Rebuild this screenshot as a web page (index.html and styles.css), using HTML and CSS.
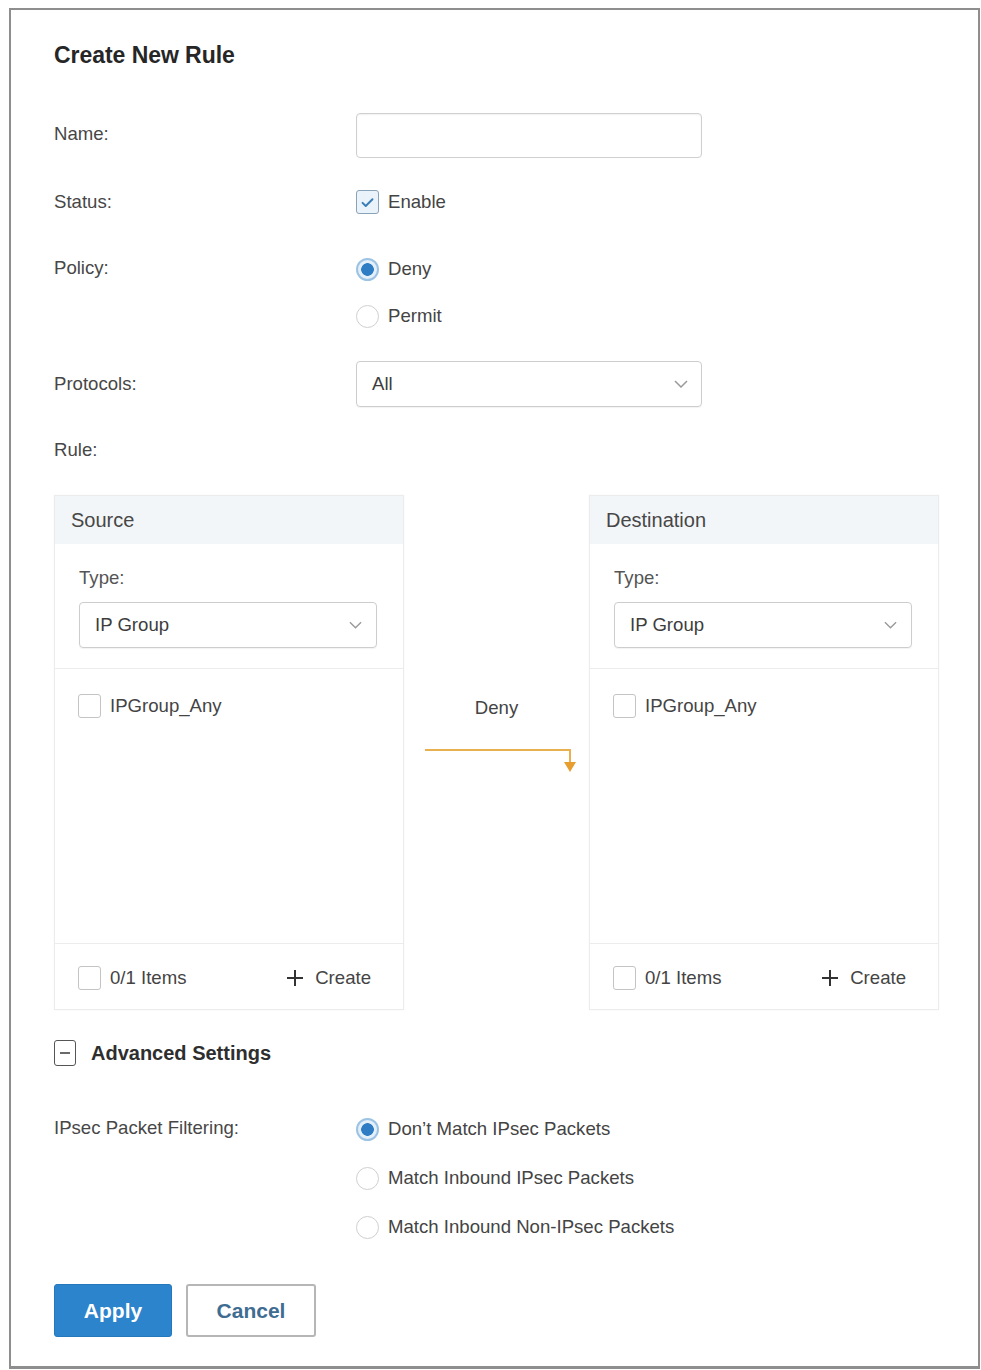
FILE: index.html
```html
<!DOCTYPE html>
<html lang="en">
<head>
<meta charset="utf-8">
<title>Create New Rule</title>
<link rel="stylesheet" href="styles.css">
</head>
<body>
<div class="frame">
  <h1 class="title">Create New Rule</h1>

  <div class="form-row row-name">
    <label class="label">Name:</label>
    <div class="input"></div>
  </div>

  <div class="form-row row-status">
    <span class="label">Status:</span>
    <div class="option">
      <span class="check checked">
        <svg viewBox="0 0 24 24" width="17" height="17"><path d="M5 12.5l4.5 4.5L19 7.5" fill="none" stroke="#3a7db6" stroke-width="2.8" stroke-linecap="round" stroke-linejoin="round"/></svg>
      </span>
      <span class="opt-text">Enable</span>
    </div>
  </div>

  <div class="form-row row-policy">
    <span class="label">Policy:</span>
    <div class="radio-list">
      <div class="option"><span class="radio on"></span><span class="opt-text">Deny</span></div>
      <div class="option"><span class="radio"></span><span class="opt-text">Permit</span></div>
    </div>
  </div>

  <div class="form-row row-protocols">
    <span class="label">Protocols:</span>
    <div class="select">
      <span class="select-text">All</span>
      <svg class="chev" viewBox="0 0 14 8" width="14" height="8"><path d="M1 1l6 6 6-6" fill="none" stroke="#9a9a9a" stroke-width="1.5"/></svg>
    </div>
  </div>

  <div class="label rule-label">Rule:</div>

  <div class="rule">
    <section class="panel">
      <div class="panel-head">Source</div>
      <div class="panel-type">
        <div class="type-label">Type:</div>
        <div class="select select-sm">
          <span class="select-text">IP Group</span>
          <svg class="chev" viewBox="0 0 14 8" width="13" height="8"><path d="M1 1l6 6 6-6" fill="none" stroke="#9a9a9a" stroke-width="1.5"/></svg>
        </div>
      </div>
      <div class="panel-list">
        <div class="option"><span class="check"></span><span class="opt-text">IPGroup_Any</span></div>
      </div>
      <div class="panel-foot">
        <div class="option"><span class="check"></span><span class="opt-text">0/1 Items</span></div>
        <div class="create">
          <svg viewBox="0 0 18 18" width="18" height="18"><path d="M9 1v16M1 9h16" stroke="#333" stroke-width="2"/></svg>
          <span>Create</span>
        </div>
      </div>
    </section>

    <div class="flow">
      <div class="flow-text">Deny</div>
      <svg class="flow-arrow" viewBox="0 0 185 40" width="185" height="40">
        <path d="M21 10H166V22" fill="none" stroke="#e9b050" stroke-width="2"/>
        <path d="M160 22h12l-6 10z" fill="#e89e2e"/>
      </svg>
    </div>

    <section class="panel">
      <div class="panel-head">Destination</div>
      <div class="panel-type">
        <div class="type-label">Type:</div>
        <div class="select select-sm">
          <span class="select-text">IP Group</span>
          <svg class="chev" viewBox="0 0 14 8" width="13" height="8"><path d="M1 1l6 6 6-6" fill="none" stroke="#9a9a9a" stroke-width="1.5"/></svg>
        </div>
      </div>
      <div class="panel-list">
        <div class="option"><span class="check"></span><span class="opt-text">IPGroup_Any</span></div>
      </div>
      <div class="panel-foot">
        <div class="option"><span class="check"></span><span class="opt-text">0/1 Items</span></div>
        <div class="create">
          <svg viewBox="0 0 18 18" width="18" height="18"><path d="M9 1v16M1 9h16" stroke="#333" stroke-width="2"/></svg>
          <span>Create</span>
        </div>
      </div>
    </section>
  </div>

  <div class="advanced">
    <span class="collapse">
      <svg viewBox="0 0 10 2" width="10" height="2"><path d="M0 1h10" stroke="#444" stroke-width="1.6"/></svg>
    </span>
    <span class="advanced-text">Advanced Settings</span>
  </div>

  <div class="form-row row-ipsec">
    <span class="label">IPsec Packet Filtering:</span>
    <div class="radio-list radio-list-wide">
      <div class="option"><span class="radio on"></span><span class="opt-text">Don’t Match IPsec Packets</span></div>
      <div class="option"><span class="radio"></span><span class="opt-text">Match Inbound IPsec Packets</span></div>
      <div class="option"><span class="radio"></span><span class="opt-text">Match Inbound Non-IPsec Packets</span></div>
    </div>
  </div>

  <div class="actions">
    <button class="btn btn-primary">Apply</button>
    <button class="btn btn-plain">Cancel</button>
  </div>
</div>
</body>
</html>
```

FILE: styles.css
```css
* { box-sizing: border-box; }

html, body {
  margin: 0;
  padding: 0;
  background: #ffffff;
}

body {
  font-family: "Liberation Sans", Arial, sans-serif;
  color: #444;
  width: 981px;
  height: 1370px;
  overflow: hidden;
}

.frame {
  margin: 8px 0 0 9px;
  width: 971px;
  border: 2px solid #8e8e8e;
  border-bottom-width: 3px;
  padding: 30px 0 29px 43px;
}

.title {
  margin: 0;
  font-size: 23px;
  line-height: 30px;
  font-weight: bold;
  color: #262626;
  letter-spacing: -0.05px;
}

/* label column + control column */
.form-row {
  display: grid;
  grid-template-columns: 302px 346px;
  align-items: center;
}

.label {
  font-size: 18.6px;
  line-height: 24px;
  color: #474747;
}

.row-name { margin-top: 43px; }
.row-status { margin-top: 31px; }
.row-policy { margin-top: 41px; align-items: start; }
.row-protocols { margin-top: 32px; }
.rule-label { margin-top: 31px; }
.row-ipsec { margin-top: 50px; align-items: start; grid-template-columns: 302px 420px; }
.row-ipsec .label { margin-top: 0; }
.row-policy .label { margin-top: 0; }
.row-name .label { margin-top: -3px; }

.input {
  height: 45px;
  border: 1px solid #cfcfcf;
  border-radius: 4px;
  box-shadow: inset 0 1px 2px rgba(0, 0, 0, 0.06);
}

.option {
  display: flex;
  align-items: center;
  gap: 9px;
  height: 26px;
}

.opt-text {
  font-size: 18.6px;
  line-height: 24px;
  color: #444;
}

.check {
  width: 23px;
  height: 24px;
  border: 1.5px solid #c4c4c4;
  border-radius: 3px;
  background: #fff;
  display: flex;
  align-items: center;
  justify-content: center;
  flex: none;
}

.check.checked {
  border-color: #8aa3b8;
  background: #eaf3fa;
}

.radio {
  width: 23px;
  height: 23px;
  border-radius: 50%;
  border: 1.5px solid #cfcfcf;
  background: #fff;
  flex: none;
}

.radio.on {
  border: 2px solid #9cc3e4;
  background: radial-gradient(circle, #2e7cc3 0 6px, #e3eff9 6.6px);
}

.radio-list {
  display: flex;
  flex-direction: column;
  gap: 21px;
}

.radio-list-wide { gap: 23px; }

.select {
  height: 46px;
  border: 1px solid #cdcdcd;
  border-radius: 4px;
  display: flex;
  align-items: center;
  justify-content: space-between;
  padding: 0 13px 0 15px;
  box-shadow: 0 1px 1px rgba(0, 0, 0, 0.05);
}

.select-text {
  font-size: 18.6px;
  line-height: 24px;
  color: #3d3d3d;
}

.select-sm { padding: 0 14px 0 15px; }

/* source / destination editor */
.rule {
  margin-top: 33px;
  display: grid;
  grid-template-columns: 350px 185px 350px;
}

.panel {
  border: 1px solid #ececec;
  display: flex;
  flex-direction: column;
  box-shadow: 0 0 2px rgba(0, 0, 0, 0.04);
}

.panel-head {
  height: 48px;
  background: #f3f6f9;
  padding-left: 16px;
  display: flex;
  align-items: center;
  font-size: 20px;
  color: #474747;
}

.panel-type {
  height: 125px;
  padding: 22px 26px 0 24px;
  border-bottom: 1px solid #ececec;
}

.type-label {
  font-size: 18.6px;
  line-height: 24px;
  color: #555;
  margin-bottom: 12px;
}

.panel-list {
  height: 275px;
  padding: 24px 0 0 23px;
  border-bottom: 1px solid #ececec;
}

.panel-foot {
  height: 65px;
  padding: 3px 32px 0 23px;
  display: flex;
  align-items: center;
  justify-content: space-between;
}

.create {
  display: flex;
  align-items: center;
  gap: 11px;
  font-size: 18.6px;
  color: #444;
}

.flow {
  display: flex;
  flex-direction: column;
  align-items: center;
  padding-top: 201px;
}

.flow-text {
  font-size: 18.6px;
  line-height: 24px;
  color: #444;
}

.flow-arrow { margin-top: 20px; }

.advanced {
  margin-top: 30px;
  height: 26px;
  display: flex;
  align-items: center;
  gap: 15px;
}

.collapse {
  width: 22px;
  height: 26px;
  border: 1.5px solid #555;
  border-radius: 3px;
  display: flex;
  align-items: center;
  justify-content: center;
}

.advanced-text {
  font-size: 20px;
  font-weight: bold;
  color: #2e2e2e;
}

.actions {
  margin-top: 44px;
  display: flex;
  gap: 14px;
}

.btn {
  height: 53px;
  border-radius: 3px;
  font-family: "Liberation Sans", Arial, sans-serif;
  font-size: 21px;
  font-weight: bold;
  cursor: pointer;
}

.btn-primary {
  width: 118px;
  background: #2b84cc;
  border: 1px solid #2479bd;
  color: #fff;
}

.btn-plain {
  width: 130px;
  background: #fff;
  border: 2px solid #b6b6b6;
  color: #3f6d92;
}
```
